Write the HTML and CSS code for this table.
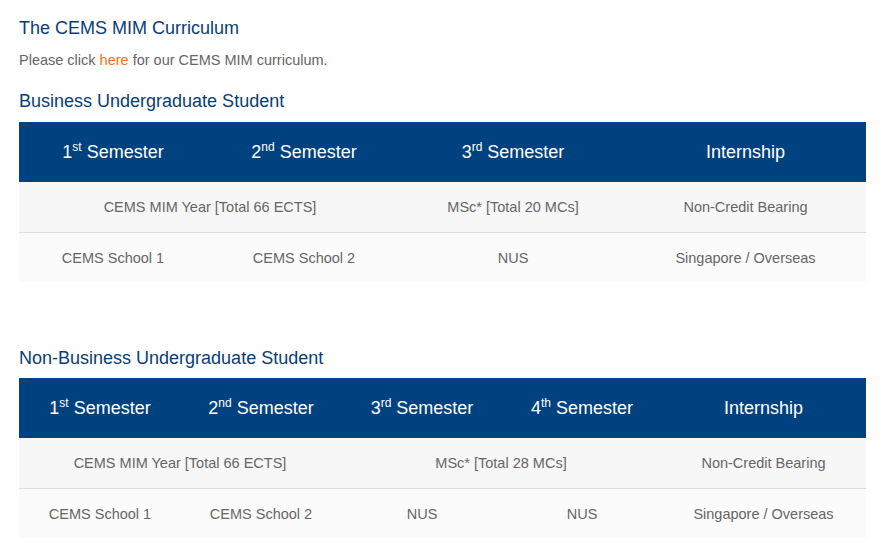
FILE: index.html
```html
<!DOCTYPE html>
<html>
<head>
<meta charset="utf-8">
<link rel="stylesheet" href="styles.css">
</head>
<body>
<div class="page">
  <h2 class="title">The CEMS MIM Curriculum</h2>
  <p class="intro">Please click <a href="#" class="link">here</a> for our CEMS MIM curriculum.</p>

  <h3 class="subtitle">Business Undergraduate Student</h3>
  <table class="curr curr-a">
    <colgroup>
      <col class="a1"><col class="a2"><col class="a3"><col class="a4">
    </colgroup>
    <thead>
      <tr class="head">
        <th>1<sup>st</sup> Semester</th>
        <th>2<sup>nd</sup> Semester</th>
        <th>3<sup>rd</sup> Semester</th>
        <th>Internship</th>
      </tr>
    </thead>
    <tbody>
      <tr class="odd">
        <td colspan="2">CEMS MIM Year [Total 66 ECTS]</td>
        <td>MSc* [Total 20 MCs]</td>
        <td>Non-Credit Bearing</td>
      </tr>
      <tr class="even">
        <td>CEMS School 1</td>
        <td>CEMS School 2</td>
        <td>NUS</td>
        <td>Singapore / Overseas</td>
      </tr>
    </tbody>
  </table>

  <h3 class="subtitle second">Non-Business Undergraduate Student</h3>
  <table class="curr curr-b">
    <colgroup>
      <col class="b1"><col class="b2"><col class="b3"><col class="b4"><col class="b5">
    </colgroup>
    <thead>
      <tr class="head">
        <th>1<sup>st</sup> Semester</th>
        <th>2<sup>nd</sup> Semester</th>
        <th>3<sup>rd</sup> Semester</th>
        <th>4<sup>th</sup> Semester</th>
        <th>Internship</th>
      </tr>
    </thead>
    <tbody>
      <tr class="odd">
        <td colspan="2">CEMS MIM Year [Total 66 ECTS]</td>
        <td colspan="2">MSc* [Total 28 MCs]</td>
        <td>Non-Credit Bearing</td>
      </tr>
      <tr class="even">
        <td>CEMS School 1</td>
        <td>CEMS School 2</td>
        <td>NUS</td>
        <td>NUS</td>
        <td>Singapore / Overseas</td>
      </tr>
    </tbody>
  </table>
</div>
</body>
</html>
```

FILE: styles.css
```css
html, body {
  margin: 0;
  padding: 0;
  background: #ffffff;
}

.page {
  padding: 17px 22px 0 19px;
  font-family: "Liberation Sans", Arial, sans-serif;
  color: #666666;
}

.title {
  margin: 0;
  font-size: 18px;
  font-weight: normal;
  line-height: 22px;
  color: #083e78;
}

.intro {
  margin: 11px 0 0 0;
  font-size: 14.5px;
  line-height: 20px;
}

.link {
  color: #f37021;
  text-decoration: none;
}

.subtitle {
  margin: 21px 0 0 0;
  font-size: 18px;
  font-weight: normal;
  line-height: 20px;
  color: #083e78;
}

.subtitle.second {
  margin-top: 66px;
}

.curr {
  margin-top: 11px;
  width: 847px;
  border-collapse: collapse;
  table-layout: fixed;
  font-size: 14.5px;
}

.curr-b {
  margin-top: 10px;
}

.a1 { width: 188px; }
.a2 { width: 194px; }
.a3 { width: 224px; }
.a4 { width: 241px; }

.b1 { width: 162px; }
.b2 { width: 160px; }
.b3 { width: 162px; }
.b4 { width: 158px; }
.b5 { width: 205px; }

.head {
  background: #00427f;
  color: #ffffff;
}

.head th {
  height: 60px;
  padding: 0;
  font-size: 18px;
  font-weight: normal;
  text-align: center;
  vertical-align: middle;
}

.head sup {
  font-size: 12px;
  line-height: 0;
  vertical-align: 7px;
}

.curr td {
  padding: 0;
  text-align: center;
  vertical-align: middle;
}

.odd td {
  height: 50px;
  background: #f7f7f7;
}

.even td {
  height: 49px;
  background: #fbfbfb;
  border-top: 1px solid #dddddd;
}
```
